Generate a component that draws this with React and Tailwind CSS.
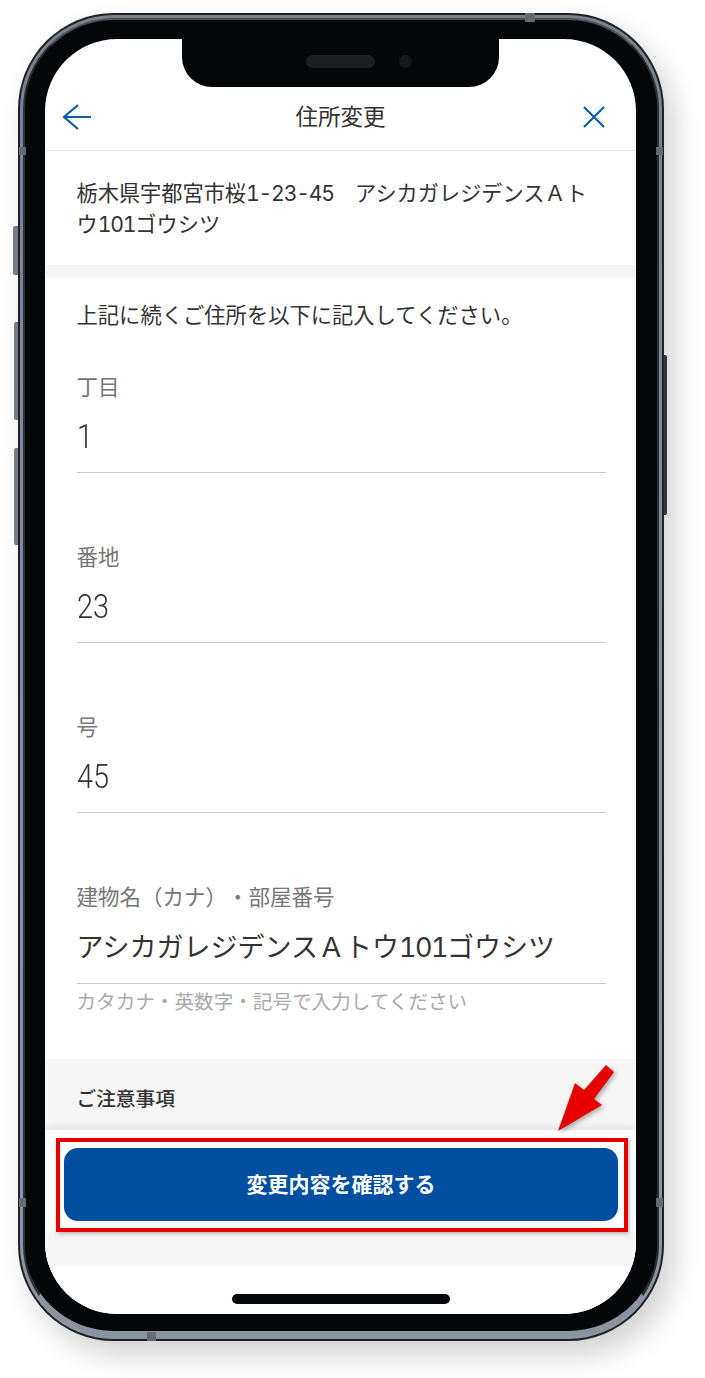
const labelClass = "h-[30px] leading-[27px] text-[21.5px] text-[#777777] [text-spacing-trim:space-all]"

const NumberField = ({ label, value }) => (
  <div className="mb-[71px]">
    <div className={labelClass}>{label}</div>
    <div className="h-[68px] leading-[64px] text-[34px] font-light font-['Roboto',sans-serif] text-[#333333]">
      <span className="inline-block origin-left scale-x-[0.85]">{value}</span>
    </div>
    <div className="h-px bg-[#cccccc]" />
  </div>
)

const Num = ({ children }) => <span className="tracking-[-0.056em]">{children}</span>

const Band = ({ className }) => <div className={`absolute bg-[#646a72] ${className}`} />

export default function App() {
  return (
    <div className="relative w-[705px] h-[1378px] bg-white overflow-hidden pt-[13px] pl-[18px] font-['Inter','Noto_Sans_CJK_JP',sans-serif] tabular-nums">
      {/* side buttons */}
      <div className="absolute left-[13px] top-[226px] w-[5px] h-[49px] rounded-l-[2px] bg-[#7a818b]" />
      <div className="absolute left-[14px] top-[322px] w-[4px] h-[98px] rounded-l-[2px] bg-[#7a818b]" />
      <div className="absolute left-[14px] top-[448px] w-[4px] h-[97px] rounded-l-[2px] bg-[#7a818b]" />
      <div className="absolute left-[664px] top-[355px] w-[3px] h-[160px] rounded-r-[2px] bg-[#3c4047]" />

      {/* phone body */}
      <div className="relative w-[646px] h-[1328px] rounded-[96px] bg-[#1e2125] p-[2px] shadow-[10px_14px_28px_rgba(0,0,0,0.18)]">
        <div className="h-full rounded-[94px] bg-gradient-to-b from-[#7a828d] to-[#8d96a1] p-[3px]">
          <div className="h-full rounded-[91px] border-x-2 border-t-2 border-b-[5px] border-x-[#2b2e33] border-t-[#4a4e55] border-b-[#8a94a0] bg-[#050607] pt-[19px] pl-[20px]">
            {/* screen */}
            <div className="relative w-[591px] h-[1275px] rounded-[72px] bg-white overflow-hidden flex flex-col text-[#333333]">
              {/* notch */}
              <div className="absolute left-[137px] top-0 w-[317px] h-[48px] rounded-b-[30px] bg-[#050607] flex items-start justify-center gap-[24px] pt-[16px] pl-[37px]">
                <div className="w-[69px] h-[13px] rounded-full bg-[#1c1e20]" />
                <div className="w-[13px] h-[13px] rounded-full bg-[#14171c]" />
              </div>

              <header className="grid grid-cols-[1fr_auto_1fr] items-center h-[112px] pt-[58px] pb-[14px] border-b border-[#e8e8e8]">
                <svg className="ml-[17px]" width="30" height="26" viewBox="0 0 30 26" fill="none" stroke="#0f5ca8" strokeWidth="2.2">
                  <path d="M16 1 2 13l14 12M2 13h27" />
                </svg>
                <h1 className="text-[22.5px] leading-[30px] font-normal">住所変更</h1>
                <svg className="justify-self-end mr-[31px]" width="22" height="22" viewBox="0 0 22 22" fill="none" stroke="#0f5ca8" strokeWidth="2.2">
                  <path d="m1 1 20 20M21 1 1 21" />
                </svg>
              </header>

              <section className="pt-[27px] pb-[25px] pl-[31.5px] text-[21.2px] leading-[31px]">
                栃木県宇都宮市桜<Num>1-23-45</Num>　アシカガレジデンスＡト<br />ウ<Num>101</Num>ゴウシツ
              </section>
              <div className="h-[13px] bg-[#f6f6f6]" />

              <section className="pl-[31.5px] pr-[30px] pt-[22px]">
                <p className="text-[21.3px] leading-[31px] mb-[43px]">上記に続くご住所を以下に記入してください。</p>
                <NumberField label="丁目" value="1" />
                <NumberField label="番地" value="23" />
                <NumberField label="号" value="45" />
                <div className="h-[140px]">
                  <div className={labelClass}>建物名（カナ）・部屋番号</div>
                  <div className="h-[69px] leading-[68px] text-[27px]">アシカガレジデンスＡトウ<Num>101</Num>ゴウシツ</div>
                  <div className="h-px bg-[#cccccc]" />
                  <p className="h-[36px] leading-[36px] text-[19.6px] text-[#aaaaaa] [text-spacing-trim:space-all]">カタカナ・英数字・記号で入力してください</p>
                </div>
              </section>

              <section className="h-[71px] mt-auto bg-[#f6f6f6] pl-[31.5px] pt-[27px] text-[19.7px] leading-[26px] font-medium">ご注意事項</section>

              <footer className="relative bg-white shadow-[0_-3px_8px_rgba(0,0,0,0.08)]">
                <div className="h-[102px] pt-[18px] pl-[19px] pr-[18px]">
                  <button className="w-full h-[73px] rounded-[14px] bg-[#014fa0] text-white text-[21px] font-bold">変更内容を確認する</button>
                </div>
                <div className="h-[34px] bg-[#f6f6f6]" />
                <div className="h-[48px] pt-[28px]">
                  <div className="mx-auto w-[218px] h-[10px] rounded-full bg-[#050607]" />
                </div>
              </footer>

              {/* annotation box */}
              <div className="absolute left-[11px] top-[1099px] w-[572px] h-[94px] border-4 border-[#e60000] shadow-[1px_2px_4px_rgba(0,0,0,0.25)]" />
            </div>
          </div>
        </div>
        <Band className="left-[507px] top-0 w-[10px] h-[9px] bg-[#8f9399]" />
        <Band className="left-[1px] top-[134px] w-[7px] h-[8px]" />
        <Band className="right-[1px] top-[134px] w-[7px] h-[8px]" />
        <Band className="left-[1px] top-[1185px] w-[7px] h-[9px]" />
        <Band className="right-[1px] top-[1185px] w-[7px] h-[9px]" />
        <Band className="left-[129px] bottom-0 w-[9px] h-[9px]" />
      </div>

      {/* annotation arrow */}
      <svg className="absolute left-[550px] top-[1060px] drop-shadow-[2px_2px_2px_rgba(0,0,0,0.3)]" width="70" height="75" viewBox="0 0 70 75">
        <path d="M8 71 25 23l9 7 22-25 8 7-20 27 8 6z" fill="#e60000" />
      </svg>
    </div>
  )
}
